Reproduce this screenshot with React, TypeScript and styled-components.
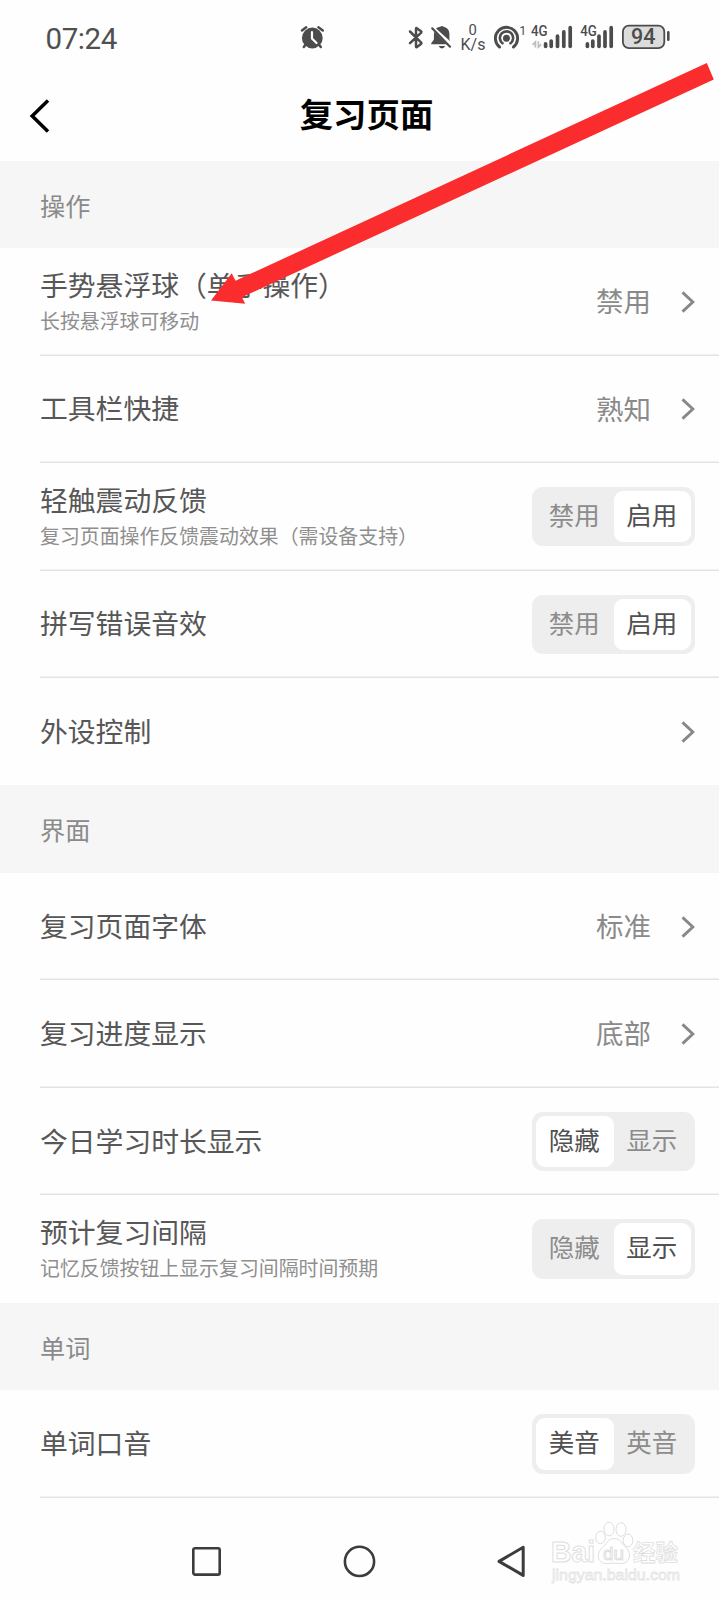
import React from "react";
import styled, { createGlobalStyle } from "styled-components";

const GlobalStyle = createGlobalStyle`
  * { box-sizing: border-box; }
  body {
    margin: 0;
    background: #fefefe;
    font-family: "Noto Sans CJK SC", "Noto Sans", sans-serif;
    color: #575757;
  }
`;

const Screen = styled.div`
  position: relative;
  display: flex;
  flex-direction: column;
  width: 719px;
  height: 1600px;
  overflow: hidden;
`;

const StatusBar = styled.div`
  display: flex;
  align-items: flex-start;
  height: 72px;
  padding: 0 49px 0 45.5px;
  color: #505050;
  font-family: Roboto, sans-serif;
`;

const Clock = styled.div`
  width: 254.5px;
  padding-top: 20px;
  font-size: 29.5px;
  letter-spacing: -0.4px;
  line-height: 38px;
`;

const StatusIcons = styled.svg`
  display: block;
  flex: none;
  font-family: Roboto, sans-serif;
`;

const Header = styled.header`
  display: grid;
  grid-template-columns: 60px 1fr 60px;
  align-items: center;
  height: 88.6px;
`;

const BackButton = styled.button`
  display: flex;
  width: 60px;
  padding: 0 0 0 27px;
  border: 0;
  background: none;
`;

const Title = styled.h1`
  margin: 0 0 6px 14px;
  color: #000;
  font-size: 33.4px;
  font-weight: 700;
  line-height: 50px;
  text-align: center;
`;

const SectionTitle = styled.h2`
  flex: none;
  height: 87.6px;
  margin: 0;
  padding: 3px 0 0 40px;
  background: #f6f6f6;
  color: #8a8a8a;
  font-size: 25.2px;
  font-weight: 400;
  line-height: 83px;
`;

const Row = styled.div<{ $last?: boolean }>`
  display: flex;
  flex: none;
  align-items: center;
  justify-content: space-between;
  height: 107.45px;
  margin-left: 40px;
  padding-right: 24px;
  box-shadow: ${(p) => (p.$last ? "none" : "inset 0 -1.6px 0 #e4e4e4")};
`;

const Labels = styled.div<{ $double: boolean }>`
  display: flex;
  flex-direction: column;
  padding-bottom: ${(p) => (p.$double ? "1.5px" : "4px")};
`;

const Label = styled.span`
  font-size: 27.8px;
  line-height: 38px;
  white-space: nowrap;
`;

const Hint = styled.span`
  padding-top: 1px;
  color: #8f8f8f;
  font-size: 19.9px;
  line-height: 33px;
  white-space: nowrap;
`;

const Choice = styled.div`
  display: flex;
  align-items: center;
  gap: 30px;
`;

const Value = styled.span`
  padding-bottom: 3.5px;
  color: #8a8a8a;
  font-size: 27.5px;
  line-height: 38px;
`;

const Toggle = styled.div`
  display: flex;
  width: 163px;
  height: 59.4px;
  padding: 4px;
  border-radius: 11px;
  background: #eee;
`;

const Option = styled.span<{ $active: boolean }>`
  flex: 1;
  padding-right: 1px;
  border-radius: 9px;
  background: ${(p) => (p.$active ? "#fff" : "transparent")};
  color: ${(p) => (p.$active ? "#505050" : "#8c8c8c")};
  font-size: 25.5px;
  line-height: 45.6px;
  text-align: center;
`;

const NavBar = styled.nav`
  display: flex;
  flex: 1;
  align-items: flex-start;
  justify-content: space-between;
  padding: 45.2px 191px 0 189px;
`;

const ArrowOverlay = styled.svg`
  position: absolute;
  top: 0;
  left: 0;
  pointer-events: none;
`;

const Watermark = styled.svg`
  position: absolute;
  left: 545px;
  top: 1515px;
  font-family: "Liberation Sans", "Noto Sans CJK SC", sans-serif;
`;

const Chevron = () => (
  <svg width="14" height="22" viewBox="0 0 14 22" fill="none" stroke="#888" strokeWidth="2.9">
    <path d="M1.5 1.4 L11.8 11 L1.5 20.6" />
  </svg>
);

type Item = {
  label: string;
  hint?: string;
  value?: string;
  options?: [string, string];
  selected?: number;
};

const sections: { title: string; items: Item[] }[] = [
  {
    title: "操作",
    items: [
      { label: "手势悬浮球（单手操作）", hint: "长按悬浮球可移动", value: "禁用" },
      { label: "工具栏快捷", value: "熟知" },
      { label: "轻触震动反馈", hint: "复习页面操作反馈震动效果（需设备支持）", options: ["禁用", "启用"], selected: 1 },
      { label: "拼写错误音效", options: ["禁用", "启用"], selected: 1 },
      { label: "外设控制" },
    ],
  },
  {
    title: "界面",
    items: [
      { label: "复习页面字体", value: "标准" },
      { label: "复习进度显示", value: "底部" },
      { label: "今日学习时长显示", options: ["隐藏", "显示"], selected: 0 },
      { label: "预计复习间隔", hint: "记忆反馈按钮上显示复习间隔时间预期", options: ["隐藏", "显示"], selected: 1 },
    ],
  },
  { title: "单词", items: [{ label: "单词口音", options: ["美音", "英音"], selected: 0 }] },
];

const SettingRow = ({ item, last }: { item: Item; last: boolean }) => (
  <Row $last={last}>
    <Labels $double={!!item.hint}>
      <Label>{item.label}</Label>
      {item.hint && <Hint>{item.hint}</Hint>}
    </Labels>
    {item.options ? (
      <Toggle>
        {item.options.map((option, i) => (
          <Option key={option} $active={i === item.selected}>
            {option}
          </Option>
        ))}
      </Toggle>
    ) : (
      <Choice>
        {item.value && <Value>{item.value}</Value>}
        <Chevron />
      </Choice>
    )}
  </Row>
);

const SignalBars = ({ xs }: { xs: number[] }) => (
  <>
    {xs.map((x, i) => (
      <path key={x} d={`M${x} ${[43.9, 41, 36.2, 31.9, 27.7][i]} V46.3`} strokeWidth="3.7" strokeLinecap="round" />
    ))}
  </>
);

const StatusGlyphs = () => (
  <StatusIcons width="370" height="60" viewBox="300 0 370 60" fill="none" stroke="#4c4c4c">
    <g>
      <circle cx="312.3" cy="38" r="10.4" fill="#4c4c4c" stroke="none" />
      <path d="M302 30.5 L306.2 27.3 M322.8 30.5 L318.4 27.3 M306 44 L303.8 47 M318.6 44 L320.8 47" strokeWidth="2.5" strokeLinecap="round" />
      <path d="M312 32 V38.5 L316.5 43" stroke="#fefefe" strokeWidth="2.2" strokeLinecap="round" />
    </g>
    <path d="M410 31.5 L421.2 42.6 Q421.8 43.3 421 44 L416.6 47.2 Q416 47.4 416 46.6 V28.6 Q416 27.8 416.7 28.2 L421 31.2 Q421.8 32 421.2 32.7 L410 43.2" strokeWidth="2.5" strokeLinejoin="round" strokeLinecap="round" />
    <g fill="#4c4c4c" stroke="none">
      <path d="M436 28.6 Q438 27 440.4 26.8 Q442 25.4 443.6 26.8 C447.5 27.7 449.4 30.4 449.4 34 V39.5 L450.2 41.2 Z" />
      <path d="M434.4 31.8 C434 33 433.9 34 433.9 35 V39.5 L431.2 43.3 V44.3 H446.6 Z" />
      <path d="M438.6 46 H445.2 Q444.2 48.4 441.9 48.4 Q439.6 48.4 438.6 46 Z" />
    </g>
    <path d="M432.2 28.3 L450 46.7" strokeWidth="2.2" strokeLinecap="round" />
    <g fill="#4c4c4c" stroke="none">
      <text x="472.7" y="35.4" fontSize="14.8" textAnchor="middle">0</text>
      <text x="473" y="50" fontSize="16" textAnchor="middle">K/s</text>
      <text x="519.3" y="35" fontSize="12.5">1</text>
    </g>
    <circle cx="506.5" cy="38.2" r="3.5" fill="#4c4c4c" stroke="none" />
    <path d="M499.5 47 A11.1 11.1 0 1 1 513.5 47" strokeWidth="2.9" strokeLinecap="round" />
    <path d="M502.5 43.2 A6.6 6.6 0 1 1 510.5 43.2" strokeWidth="2.6" strokeLinecap="round" />
    <g fill="#4c4c4c" stroke="none" fontSize="14.8" fontWeight="500">
      <text x="531" y="36.4" textLength="16.6" lengthAdjust="spacingAndGlyphs">4G</text>
      <text x="580.3" y="36.4" textLength="16.6" lengthAdjust="spacingAndGlyphs">4G</text>
    </g>
    <path d="M535.4 47.6 V42 L532.6 44.8 M538.4 41.2 V47 L541.2 44.4" stroke="#bdbdbd" strokeWidth="1.7" />
    <SignalBars xs={[545.6, 551.2, 557.5, 563.8, 570.2]} />
    <SignalBars xs={[587.4, 592.8, 599, 605, 611.2]} />
    <rect x="622.9" y="25.7" width="41.4" height="22.4" rx="6" fill="#dcdcdc" strokeWidth="1.8" />
    <path d="M668.3 32.3 V39.8" strokeWidth="2.6" strokeLinecap="round" />
    <text x="643.3" y="44.2" fontSize="21.5" fontWeight="500" textAnchor="middle" fill="#4c4c4c" stroke="none">94</text>
  </StatusIcons>
);

export default function App() {
  return (
    <Screen>
      <GlobalStyle />
      <StatusBar>
        <Clock>07:24</Clock>
        <StatusGlyphs />
      </StatusBar>
      <Header>
        <BackButton aria-label="返回">
          <svg width="24" height="36" viewBox="0 0 24 36" fill="none" stroke="#000" strokeWidth="3.5">
            <path d="M21 2.5 L5.2 18 L21 33.5" />
          </svg>
        </BackButton>
        <Title>复习页面</Title>
      </Header>
      {sections.map((section) => (
        <React.Fragment key={section.title}>
          <SectionTitle>{section.title}</SectionTitle>
          {section.items.map((item, i) => (
            <SettingRow
              key={item.label}
              item={item}
              last={i === section.items.length - 1 && section.items.length > 1}
            />
          ))}
        </React.Fragment>
      ))}
      <NavBar>
        <svg width="34" height="36" viewBox="0 0 34 36" fill="none" stroke="#3c3c3c" strokeWidth="2.6">
          <rect x="4.3" y="5.2" width="26.4" height="26.4" rx="1.6" />
        </svg>
        <svg width="36" height="36" viewBox="0 0 36 36" fill="none" stroke="#3c3c3c" strokeWidth="2.6">
          <circle cx="17.5" cy="18.4" r="14.6" />
        </svg>
        <svg width="32" height="36" viewBox="0 0 32 36" fill="none" stroke="#3c3c3c" strokeWidth="3" strokeLinejoin="round">
          <path d="M3 18.4 L27.2 4.2 V32.4 Z" />
        </svg>
      </NavBar>
      <Watermark width="150" height="75" viewBox="545 1515 150 75" fill="#fff" stroke="#dedede" strokeWidth="1">
        <text x="551" y="1562" fontSize="29" fontWeight="700" textLength="44" lengthAdjust="spacingAndGlyphs">Bai</text>
        <ellipse cx="600.5" cy="1537.5" rx="4.8" ry="6.2" />
        <ellipse cx="609" cy="1529" rx="5" ry="6.8" />
        <ellipse cx="621" cy="1529.5" rx="5" ry="6.8" />
        <ellipse cx="628" cy="1540.5" rx="4.8" ry="6.4" />
        <path d="M614.5 1538.5 C620 1538.5 622 1544 626 1547.5 C632 1553 630 1563.5 621.5 1563.5 C617 1563.5 612 1562.6 608 1563.5 C597 1564.5 596 1553 602 1548 C607 1544 608 1538.5 614.5 1538.5 Z" />
        <text x="603" y="1559.5" fontSize="19" textLength="21" lengthAdjust="spacingAndGlyphs">du</text>
        <text x="633" y="1560.5" fontSize="22.5" fontWeight="700" textLength="45" lengthAdjust="spacingAndGlyphs" strokeWidth="0.8">经验</text>
        <text x="552" y="1579.5" fontSize="15.5" textLength="128" lengthAdjust="spacingAndGlyphs" stroke="#e4e4e4" strokeWidth="0.8">jingyan.baidu.com</text>
      </Watermark>
      <ArrowOverlay width="719" height="320" viewBox="0 0 719 320" fill="#fb2c2e">
        <path d="M706.8 63 L713.8 79.6 L242 297.2 L245.2 303.8 L211 300.4 L231.7 273.3 L235.5 280.8 Z" />
      </ArrowOverlay>
    </Screen>
  );
}
